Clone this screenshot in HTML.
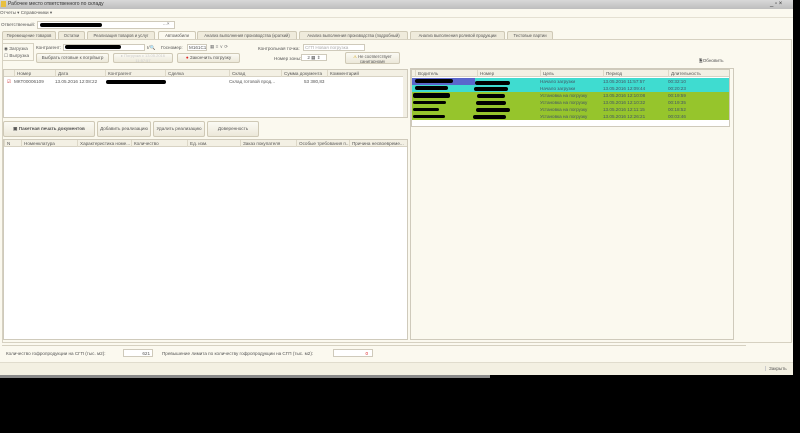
<!DOCTYPE html>
<html><head><meta charset="utf-8">
<style>
*{box-sizing:border-box;margin:0;padding:0}
body{width:800px;height:433px;background:#000;position:relative;overflow:hidden;font-family:"Liberation Sans",sans-serif;font-size:4.6px;color:#555}
.a{position:absolute}
.win{left:0;top:0;width:793px;height:375px;background:#fbf9ef}
.title{left:0;top:0;width:793px;height:9px;background:linear-gradient(#d8d8d8,#bdbdbd);font-size:5px;line-height:9px;padding-left:8px;color:#333}
.box{border:1px solid #cfcabb;background:#fff}
.btn{border:1px solid #cfc9b6;background:linear-gradient(#fbfaf4,#ece8d9);border-radius:2px;text-align:center;line-height:1.2;white-space:nowrap;overflow:hidden}
.tab{top:31px;height:8px;border:1px solid #cfc9b6;border-bottom:none;background:#efebdc;line-height:7px;padding:0 2px;border-radius:2px 2px 0 0;white-space:nowrap;overflow:hidden;font-size:4.2px;text-align:center}
.hdr{background:#f3f0e4;border-bottom:1px solid #d8d3c4;height:7px;line-height:7px}
.hdr span,.row span{position:absolute;white-space:nowrap}
.hdr span{border-left:1px solid #ddd8c8;padding-left:2px;height:7px}
.row{height:7px;line-height:7px;position:absolute;left:0;right:0}
.blk{background:#000;height:4px;border-radius:2px;position:absolute}
.cy{background:#3fdcd0}.gr{background:#96c52c}
.row.cy,.row.gr{color:#456}
</style></head><body>
<div class="a win"></div>
<div class="a title">Рабочее место ответственного по складу</div>
<div class="a" style="left:1px;top:1px;width:5px;height:6px;background:#e8c040"></div>
<div class="a" style="left:770px;top:1px;font-size:6px;color:#333">_ ▫ ×</div>
<div class="a" style="left:0;top:9px;line-height:8px">Отчеты ▾ Справочники ▾</div>
<div class="a" style="left:0;top:17px;width:793px;height:1px;background:#e4e0d2"></div>
<div class="a" style="left:1px;top:22px">Ответственный:</div>
<div class="a box" style="left:37px;top:21px;width:138px;height:8px"></div>
<div class="blk" style="left:40px;top:23px;width:62px"></div>
<div class="a" style="left:163px;top:21px">...×</div>
<div class="a tab" style="left:2px;width:54px">Перемещение товаров</div>
<div class="a tab" style="left:58px;width:27px">Остатки</div>
<div class="a tab" style="left:87px;width:68px">Реализация товаров и услуг</div>
<div class="a tab" style="left:158px;width:38px;background:#fbf9ef;height:9px">Автомобили</div>
<div class="a tab" style="left:197px;width:100px">Анализ выполнения производства (краткий)</div>
<div class="a tab" style="left:299px;width:109px">Анализ выполнения производства (подробный)</div>
<div class="a tab" style="left:410px;width:95px">Анализ выполнения ролевой продукции</div>
<div class="a tab" style="left:507px;width:46px">Тестовые партии</div>
<div class="a" style="left:2px;top:39px;width:790px;height:304px;border:1px solid #d6d1c1"></div>
<div class="a" style="left:2px;top:43px;width:32px;height:18px;border:1px solid #d6d1c1"></div>
<div class="a" style="left:4px;top:46px">◉ Загрузка</div>
<div class="a" style="left:4px;top:53px">☐ Выгрузка</div>
<div class="a" style="left:36px;top:45px">Контрагент:</div>
<div class="a box" style="left:63px;top:44px;width:82px;height:7px"></div>
<div class="blk" style="left:65px;top:45px;width:56px"></div>
<div class="a" style="left:147px;top:45px">I/🔍</div>
<div class="a" style="left:161px;top:45px">Госномер:</div>
<div class="a box" style="left:187px;top:44px;width:20px;height:7px;padding-left:1px;line-height:6px">М161С1</div>
<div class="a" style="left:210px;top:44px;color:#777">▦ ≡ ⋎ ⟳</div>
<div class="a" style="left:258px;top:46px">Контрольная точка:</div>
<div class="a box" style="left:303px;top:44px;width:62px;height:7px;color:#aaa;line-height:6px;padding-left:1px">СГП Новая погрузка</div>
<div class="a btn" style="left:36px;top:53px;width:73px;height:10px;line-height:8px">Выбрать готовые к погр/выгр</div>
<div class="a btn" style="left:113px;top:53px;width:60px;height:10px;color:#ccc;font-size:4px;white-space:normal">▸ Погрузка с 13.05.2016 11:57:57</div>
<div class="a btn" style="left:177px;top:53px;width:63px;height:10px;line-height:8px"><span style="color:#d22">●</span> Закончить погрузку</div>
<div class="a" style="left:274px;top:56px">Номер зоны:</div>
<div class="a box" style="left:301px;top:54px;width:26px;height:7px;text-align:center;line-height:6px">2 ▦ ⇕</div>
<div class="a btn" style="left:345px;top:52px;width:55px;height:12px;font-size:4.2px;padding-top:1px;white-space:normal"><span style="color:#c90">⚠</span> Не соответствует санитарному</div>
<div class="a" style="left:699px;top:57px">🗎Обновить</div>
<div class="a box" style="left:3px;top:69px;width:405px;height:49px">
 <div class="hdr" style="position:relative">
  <span style="left:10px">Номер</span><span style="left:51px">Дата</span><span style="left:101px">Контрагент</span><span style="left:161px">Сделка</span><span style="left:225px">Склад</span><span style="left:277px">Сумма документа</span><span style="left:323px">Комментарий</span>
 </div>
 <div class="row" style="top:8px;background:#fff">
  <span style="left:3px;color:#c33">☑</span><span style="left:10px">МКТ00006109</span><span style="left:51px">13.05.2016 12:08:22</span><span style="left:225px">Склад готовой прод...</span><span style="left:300px">53 380,83</span>
 </div>
 <div class="blk" style="left:102px;top:10px;width:60px"></div>
 <div class="a" style="right:0;top:0;width:4px;height:47px;background:#f2efe4"></div>
</div>
<div class="a btn" style="left:3px;top:121px;width:92px;height:16px;line-height:14px;font-weight:bold">▣ Пакетная печать документов</div>
<div class="a btn" style="left:97px;top:121px;width:54px;height:16px;line-height:14px">Добавить реализацию</div>
<div class="a btn" style="left:153px;top:121px;width:52px;height:16px;line-height:14px">Удалить реализацию</div>
<div class="a btn" style="left:207px;top:121px;width:52px;height:16px;line-height:14px">Доверенность</div>
<div class="a box" style="left:3px;top:139px;width:405px;height:201px">
 <div class="hdr" style="position:relative">
  <span style="left:0">N</span><span style="left:17px">Номенклатура</span><span style="left:73px">Характеристика номе...</span><span style="left:127px">Количество</span><span style="left:183px">Ед. изм.</span><span style="left:236px">Заказ покупателя</span><span style="left:292px">Особые требования п...</span><span style="left:345px">Причина несвоевреме...</span>
 </div>
</div>
<div class="a box" style="left:410px;top:68px;width:324px;height:272px;background:#fbf9ef"></div>
<div class="a box" style="left:411px;top:69px;width:319px;height:58px">
 <div class="hdr" style="position:relative">
  <span style="left:3px">Водитель</span><span style="left:65px">Номер</span><span style="left:128px">Цель</span><span style="left:191px">Период</span><span style="left:256px">Длительность</span>
 </div>
 <div class="row cy" style="top:8px"><span style="left:0;width:63px;height:7px;background:#5a66cc"></span><span style="left:128px">Начало загрузки</span><span style="left:191px">13.05.2016 11:57:57</span><span style="left:256px">00:32:10</span></div>
 <div class="row cy" style="top:15px"><span style="left:128px">Начало загрузки</span><span style="left:191px">13.05.2016 12:09:44</span><span style="left:256px">00:20:23</span></div>
 <div class="row gr" style="top:22px"><span style="left:128px">Установка на погрузку</span><span style="left:191px">13.05.2016 12:10:08</span><span style="left:256px">00:19:59</span></div>
 <div class="row gr" style="top:29px"><span style="left:128px">Установка на погрузку</span><span style="left:191px">13.05.2016 12:10:32</span><span style="left:256px">00:19:35</span></div>
 <div class="row gr" style="top:36px"><span style="left:128px">Установка на погрузку</span><span style="left:191px">13.05.2016 12:11:15</span><span style="left:256px">00:18:52</span></div>
 <div class="row gr" style="top:43px"><span style="left:128px">Установка на погрузку</span><span style="left:191px">13.05.2016 12:26:21</span><span style="left:256px">00:03:46</span></div>
 <div class="blk" style="left:3px;top:9px;width:38px"></div><div class="blk" style="left:63px;top:11px;width:35px"></div>
 <div class="blk" style="left:3px;top:16px;width:33px"></div><div class="blk" style="left:62px;top:17px;width:34px"></div>
 <div class="blk" style="left:1px;top:23px;width:37px;height:5px"></div><div class="blk" style="left:65px;top:24px;width:28px"></div>
 <div class="blk" style="left:1px;top:31px;width:33px;height:3px"></div><div class="blk" style="left:64px;top:31px;width:30px"></div>
 <div class="blk" style="left:1px;top:38px;width:26px;height:3px"></div><div class="blk" style="left:64px;top:38px;width:34px"></div>
 <div class="blk" style="left:1px;top:45px;width:32px;height:3px"></div><div class="blk" style="left:61px;top:45px;width:33px"></div>
</div>
<div class="a" style="left:2px;top:345px;width:744px;height:1px;background:#d6d1c1"></div>
<div class="a" style="left:6px;top:351px">Количество гофропродукции на СГП (тыс. м2):</div>
<div class="a box" style="left:123px;top:349px;width:30px;height:8px;text-align:right;padding-right:2px;line-height:7px">621</div>
<div class="a" style="left:162px;top:351px">Превышение лимита по количеству гофропродукции на СГП (тыс. м2):</div>
<div class="a box" style="left:333px;top:349px;width:40px;height:8px;text-align:right;padding-right:4px;line-height:7px;color:#d22">0</div>
<div class="a" style="left:0;top:362px;width:793px;height:13px;background:#f3f0e2;border-top:1px solid #e0dccd"></div>
<div class="a" style="left:765px;top:366px;border-left:1px solid #ccc;padding-left:3px">Закрыть</div>
<div class="a" style="left:0;top:375px;width:490px;height:3px;background:#8a8a8a"></div>
</body></html>
